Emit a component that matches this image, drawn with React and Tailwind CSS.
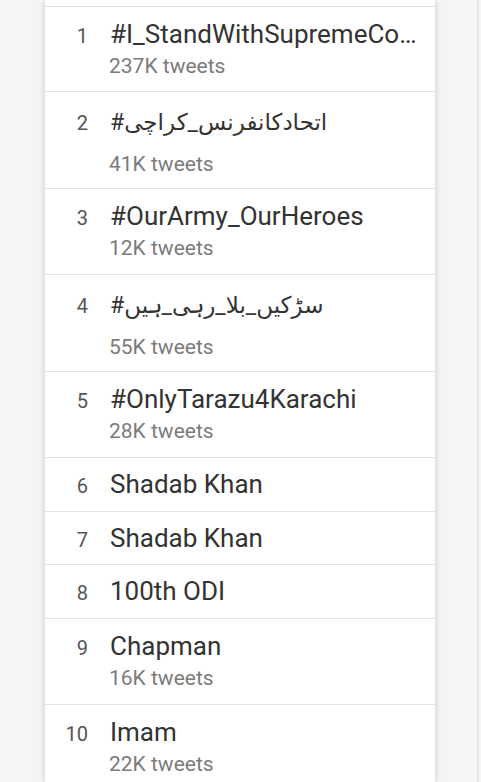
const trends = [
  { rank: 1, title: "#I_StandWithSupremeCourt", tweets: "237K tweets", pad: "pt-[12px] pb-[12px]" },
  { rank: 2, title: "#اتحادکانفرنس_کراچی", tweets: "41K tweets", urdu: true },
  { rank: 3, title: "#OurArmy_OurHeroes", tweets: "12K tweets" },
  { rank: 4, title: "#سڑکیں_بلا_رہی_ہیں", tweets: "55K tweets", urdu: true },
  { rank: 5, title: "#OnlyTarazu4Karachi", tweets: "28K tweets" },
  { rank: 6, title: "Shadab Khan" },
  { rank: 7, title: "Shadab Khan", pad: "pt-[11px] pb-[11px]" },
  { rank: 8, title: "100th ODI" },
  { rank: 9, title: "Chapman", tweets: "16K tweets" },
  { rank: 10, title: "Imam", tweets: "22K tweets" },
];

function TrendRow({ trend }) {
  let pad = "pt-[12px] pb-[13px]";
  if (!trend.tweets) pad = "pt-[11px] pb-[12px]";
  if (trend.urdu) pad = "pt-[10px] pb-[11px]";
  if (trend.pad) pad = trend.pad;
  return (
    <div className={"flex items-baseline border-t border-[#e4e4e4] " + pad}>
      <div className="w-[43px] shrink-0 text-right text-[20px] leading-[20px] text-[#555555]">
        {trend.rank}
      </div>
      <div className="ml-[22px] min-w-0 flex-1 pr-[16px]">
        <div
          className={
            "truncate text-[#333333] " +
            (trend.urdu ? "text-[23px] leading-[42px]" : "text-[26px] leading-[30px]")
          }
        >
          {trend.title}
        </div>
        {trend.tweets && (
          <div
            className={
              "-ml-[1px] text-[21px] leading-[25px] text-[#7b7b7b] " +
              (trend.urdu ? "mt-[8px]" : "mt-[5px]")
            }
          >
            {trend.tweets}
          </div>
        )}
      </div>
    </div>
  );
}

export default function App() {
  return (
    <div
      className="flex h-[782px] w-[481px] overflow-hidden bg-[#f5f5f5]"
      style={{ fontFamily: "Roboto, 'DejaVu Sans', sans-serif" }}
    >
      <div className="ml-[45px] w-[390px] shrink-0 bg-white shadow-[0_0_6px_rgba(0,0,0,0.18)]">
        <div className="h-[6px]" />
        {trends.map((t) => (
          <TrendRow key={t.rank} trend={t} />
        ))}
      </div>
      <div className="mr-[2px] flex-1 border-r-2 border-[#e6e6e6]" />
    </div>
  );
}
